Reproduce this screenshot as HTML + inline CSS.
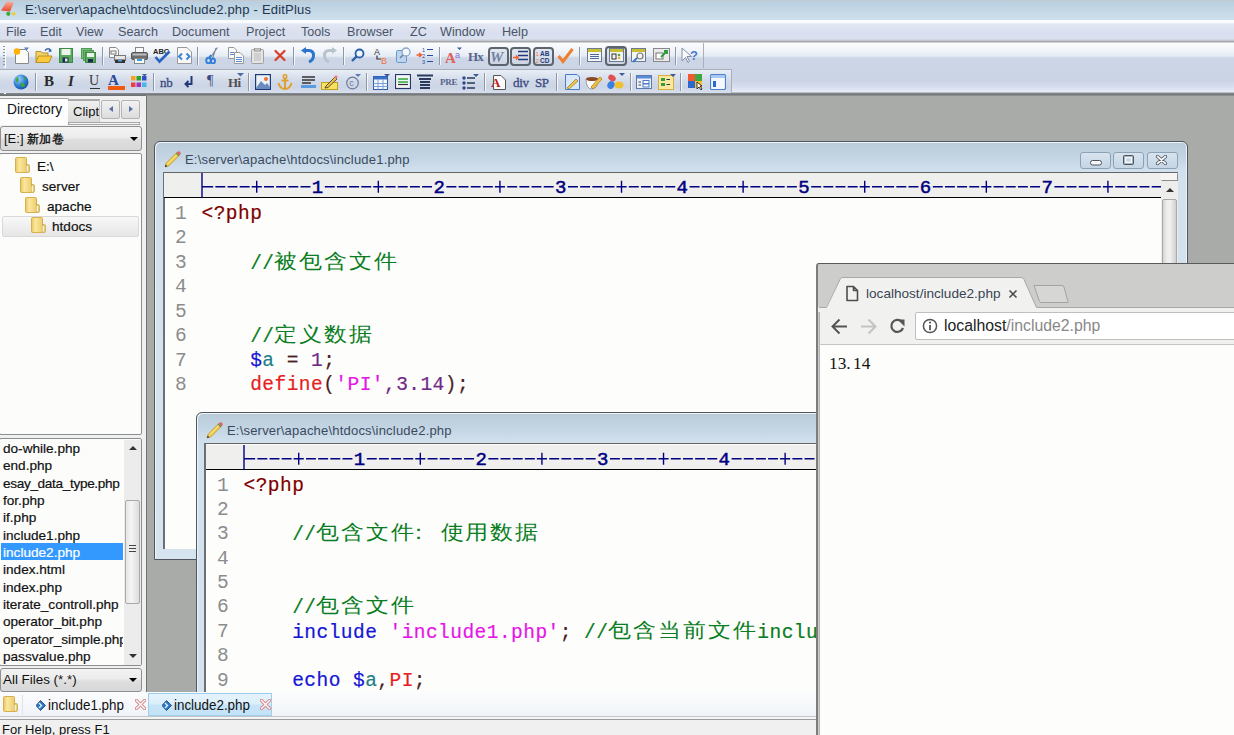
<!DOCTYPE html>
<html><head><meta charset="utf-8">
<style>
*{box-sizing:border-box}
html,body{margin:0;padding:0}
body{width:1234px;height:735px;overflow:hidden;position:relative;background:#a8aba7;font-family:"Liberation Sans",sans-serif;font-size:12px;color:#000}
.a{position:absolute}
.t{position:absolute;white-space:nowrap;line-height:1}
.fold{width:14px;height:14px;background:linear-gradient(90deg,#f0d070,#fbe9a0 50%,#e6c260);border-radius:1px;border:1px solid #d9b24a}
.frame{border:1px solid #50565c;border-radius:6px 6px 0 0;background:linear-gradient(#b9cad9,#c3d4e3 15px,#d2e1ee 30px,#d6e4f0);box-shadow:inset 1px 1px 0 #eef4fa,inset -1px 0 0 #eef4fa}
.pencil{width:17px;height:17px}
.wtitle{font-size:13px;color:#3a4a5e;letter-spacing:0.2px}
.wbtn{width:31px;height:17px;border:1px solid #8ea2b6;border-radius:3px;background:linear-gradient(#d8e4ef,#c5d5e4)}
.code{position:absolute;white-space:pre;font-family:"Liberation Mono",monospace;font-size:19.5px;letter-spacing:0.46px;line-height:24.3px;height:24.3px;-webkit-text-stroke:0.2px}
.code .cj{font-size:22.5px;letter-spacing:1.82px;display:inline-block;transform:scale(1,0.87);transform-origin:0 55%;-webkit-text-stroke:0}
.ln{color:#8c8c8c;-webkit-text-stroke:0}
.dia{width:8px;height:8px;transform:rotate(45deg);background:linear-gradient(135deg,#8fd0f5,#1a6fb8);border:1px solid #1a4f8a}
.xcl{font-size:11px;color:#d06060;line-height:1}
.mono{font-family:"Liberation Mono",monospace}
</style></head><body>

<!-- TITLE BAR -->
<div class="a" style="left:0;top:0;width:1234px;height:21px;background:linear-gradient(#c2cad0 0,#c2cad0 1px,#b9cfdf 1px,#c6d9e7 12px,#cee0ec 20px)"></div>
<svg class="a" style="left:0;top:0" width="18" height="18" viewBox="0 0 18 18"><defs><linearGradient id="tg" x1="0" y1="0" x2="0" y2="1"><stop offset="0" stop-color="#f8b0a0"/><stop offset="1" stop-color="#e8482a"/></linearGradient></defs><path d="M1 10.5L6.5 1.5L14 2.5L10 11.5Z" fill="url(#tg)"/><circle cx="8.3" cy="13.8" r="2.1" fill="#3aaa3a"/><path d="M13.8 11.3L14.6 13L16.3 13.8L14.6 14.6L13.8 16.3L13 14.6L11.3 13.8L13 13Z" fill="#e8c818"/><circle cx="13.8" cy="13.8" r="1.4" fill="#f0d020"/></svg>
<div class="t" id="ttl" style="left:25px;top:3px;font-size:13px;letter-spacing:0.2px;color:#22364f">E:\server\apache\htdocs\include2.php - EditPlus</div>

<!-- MENU BAR -->
<div class="a" style="left:0;top:20px;width:1234px;height:21px;background:linear-gradient(#f6f9fd 0,#fdfeff 2px,#e2e7f3 4px,#dae0ef 12px,#d8dfef 18px,#dfe4f1 19px,#c4c8ce 20px)"></div>
<div id="menu" style="color:#4a5466;font-size:12.6px">
<div class="t" style="left:6px;top:26px">File</div>
<div class="t" style="left:40px;top:26px">Edit</div>
<div class="t" style="left:76px;top:26px">View</div>
<div class="t" style="left:118px;top:26px">Search</div>
<div class="t" style="left:172px;top:26px">Document</div>
<div class="t" style="left:246px;top:26px">Project</div>
<div class="t" style="left:301px;top:26px">Tools</div>
<div class="t" style="left:347px;top:26px">Browser</div>
<div class="t" style="left:410px;top:26px">ZC</div>
<div class="t" style="left:440px;top:26px">Window</div>
<div class="t" style="left:502px;top:26px">Help</div>
</div>

<!-- REBAR -->
<div class="a" style="left:0;top:41px;width:1234px;height:55px;background:linear-gradient(#a4a8ac 0,#a4a8ac 1px,#fbfcfd 2px,#f3f6fa 8px,#e6ecf5 15px,#cdd6e6 17px,#cbd4e5 40px,#d7deee 46px,#e8eefa 51px,#8a8e90 52px,#6f7274 54px,#a9aaa9 55px)"></div>


<!-- TOOLBAR -->
<div class="a" style="left:3px;top:46px;width:2px;height:21px;background:repeating-linear-gradient(#8c95a3 0,#8c95a3 1px,transparent 1px,transparent 3px);box-shadow:1px 1px 0 #fff"></div>
<div class="a" style="left:3px;top:72px;width:2px;height:21px;background:repeating-linear-gradient(#8c95a3 0,#8c95a3 1px,transparent 1px,transparent 3px);box-shadow:1px 1px 0 #fff"></div>
<svg class="a" style="left:13px;top:47px" width="17" height="17" viewBox="0 0 17 17"><path d="M2.5 2.5H12.5L15.5 5.5V16.5H2.5Z" fill="#fbfbfa" stroke="#8a8a8a"/><circle cx="4" cy="4.5" r="3.2" fill="#ffb000"/><path d="M11 0.5H16L13.5 3.5Z" fill="#4f7fbf"/></svg>
<svg class="a" style="left:35px;top:47px" width="18" height="17" viewBox="0 0 18 17"><path d="M1 4.5H6L7.5 6H13V15.5H1Z" fill="#f1d36a" stroke="#b0902a"/><path d="M3.5 9H17L14 15.5H1Z" fill="#f9c93e" stroke="#c09020"/><path d="M10 3.5Q13 0 16 3.5" fill="none" stroke="#3a68a8" stroke-width="1.6"/><path d="M14.5 1.5L17 4.5L13.5 5Z" fill="#3a68a8"/></svg>
<svg class="a" style="left:59px;top:48px" width="14" height="15" viewBox="0 0 14 15"><rect x="0.5" y="0.5" width="13" height="14" fill="#5aa860" stroke="#3f8a45"/><rect x="2.5" y="1" width="9" height="6" fill="#eaf4ea"/><rect x="3.5" y="9.5" width="6" height="5" fill="#1c2e50"/><rect x="6" y="10.5" width="2.5" height="3" fill="#e8e8e8"/></svg>
<svg class="a" style="left:81px;top:48px" width="15" height="15" viewBox="0 0 15 15"><rect x="0.5" y="0.5" width="10" height="10" fill="#7cc080" stroke="#4f9a55"/><rect x="2.5" y="2.5" width="10" height="10" fill="#6ab470" stroke="#4f9a55"/><rect x="4.5" y="4.5" width="10" height="10" fill="#5aa860" stroke="#3f8a45"/><rect x="6" y="5" width="7" height="4" fill="#e8f2e8"/><rect x="7" y="11" width="5" height="3.5" fill="#1c2e50"/></svg>
<div class="a" style="left:102px;top:47px;width:1px;height:18px;background:#8e97a6;box-shadow:1px 0 0 #f4f7fb"></div>
<svg class="a" style="left:109px;top:47px" width="17" height="17" viewBox="0 0 17 17"><path d="M0.5 0.5H7L9.5 3V10.5H0.5Z" fill="#fafafa" stroke="#8a8a8a"/><rect x="2" y="4" width="5" height="3" fill="none" stroke="#777"/><rect x="5.5" y="8.5" width="11" height="5" fill="#e6e6e6" stroke="#777"/><rect x="6" y="12.5" width="10" height="3.5" fill="#333"/><rect x="9" y="13" width="4" height="1.5" fill="#4aa0e0"/></svg>
<svg class="a" style="left:131px;top:47px" width="17" height="17" viewBox="0 0 17 17"><rect x="4.5" y="0.5" width="8" height="5" fill="#fafafa" stroke="#888"/><rect x="0.5" y="5.5" width="16" height="7" rx="1.5" fill="#6e6e6e" stroke="#555"/><rect x="1.5" y="6.5" width="14" height="2" fill="#bdbdbd"/><rect x="3.5" y="11.5" width="10" height="5" fill="#fafafa" stroke="#888"/><rect x="6" y="12" width="5" height="2" fill="#3b9ad8"/></svg>
<svg class="a" style="left:153px;top:47px" width="18" height="17" viewBox="0 0 18 17"><text x="0" y="7" font-family="Liberation Sans" font-weight="bold" font-size="7.5" fill="#222">ABC</text><path d="M2.5 10L6.5 14.5L16.5 4.5" fill="none" stroke="#2a62c0" stroke-width="2.6"/></svg>
<svg class="a" style="left:177px;top:47px" width="15" height="17" viewBox="0 0 15 17"><path d="M0.5 0.5H10L14.5 5V16.5H0.5Z" fill="#f8f8f8" stroke="#999"/><path d="M5 6.5L2 9.5L5 12.5M9.5 6.5L12.5 9.5L9.5 12.5" fill="none" stroke="#3a86d8" stroke-width="2"/></svg>
<div class="a" style="left:197px;top:47px;width:1px;height:18px;background:#8e97a6;box-shadow:1px 0 0 #f4f7fb"></div>
<svg class="a" style="left:205px;top:47px" width="14" height="17" viewBox="0 0 14 17"><path d="M5 11L12.5 0.5M7.5 11.5L11 1" fill="none" stroke="#7a8aa0" stroke-width="1.2"/><ellipse cx="3.5" cy="13.5" rx="2.3" ry="2.8" fill="none" stroke="#2f7fd8" stroke-width="1.9"/><ellipse cx="8" cy="14" rx="2" ry="2.5" fill="none" stroke="#2f7fd8" stroke-width="1.9"/><path d="M4.5 10.5L6 8" stroke="#2f7fd8" stroke-width="2"/></svg>
<svg class="a" style="left:228px;top:47px" width="16" height="17" viewBox="0 0 16 17"><path d="M0.5 0.5H6L8.5 3V11.5H0.5Z" fill="#f9f9f9" stroke="#9a9a9a"/><path d="M6.5 5.5H12L15.5 9V16.5H6.5Z" fill="#f9f9f9" stroke="#9a9a9a"/><path d="M8 10.5H14M8 12.5H14M8 14.5H14M2 5.5H6M2 7.5H6" stroke="#5a8ad0" stroke-width="1"/></svg>
<svg class="a" style="left:251px;top:48px" width="13" height="16" viewBox="0 0 13 16"><rect x="0.5" y="1.5" width="12" height="14" rx="1" fill="#e4e4e4" stroke="#a0a0a0"/><rect x="3.5" y="0" width="6" height="3" fill="#c8c8c8" stroke="#999"/><path d="M3 6H10M3 8H10M3 10H10M3 12H10" stroke="#bbb"/></svg>
<svg class="a" style="left:273px;top:49px" width="14" height="13" viewBox="0 0 14 13"><path d="M2.5 2L11.5 11M11.5 2L2.5 11" stroke="#d8402a" stroke-width="2.3" stroke-linecap="round"/></svg>
<div class="a" style="left:293px;top:47px;width:1px;height:18px;background:#8e97a6;box-shadow:1px 0 0 #f4f7fb"></div>
<svg class="a" style="left:301px;top:47px" width="14" height="17" viewBox="0 0 14 17"><path d="M3 3.5H8Q12.5 3.5 12.5 8.5Q12.5 13 8 15" fill="none" stroke="#2a74d0" stroke-width="3"/><path d="M0 3.5L5 0V7Z" fill="#2a74d0"/></svg>
<svg class="a" style="left:323px;top:47px" width="14" height="17" viewBox="0 0 14 17"><path d="M11 3.5H6Q1.5 3.5 1.5 8.5Q1.5 13 6 15" fill="none" stroke="#b8c4cc" stroke-width="3"/><path d="M14 3.5L9 0V7Z" fill="#b8c4cc"/></svg>
<div class="a" style="left:343px;top:47px;width:1px;height:18px;background:#8e97a6;box-shadow:1px 0 0 #f4f7fb"></div>
<svg class="a" style="left:351px;top:48px" width="14" height="15" viewBox="0 0 14 15"><circle cx="8.5" cy="5.5" r="4" fill="#eef5fc" stroke="#2a5fa8" stroke-width="1.8"/><path d="M5.5 8.5L1 13" stroke="#2a5fa8" stroke-width="2.4"/></svg>
<svg class="a" style="left:373px;top:47px" width="17" height="17" viewBox="0 0 17 17"><text x="1" y="8" font-family="Liberation Sans" font-size="9" fill="#333">A</text><path d="M4 8.5V12H8" fill="none" stroke="#333" stroke-width="1.2"/><text x="8" y="16.5" font-family="Liberation Sans" font-size="9" fill="#f0703a">B</text></svg>
<svg class="a" style="left:396px;top:47px" width="15" height="17" viewBox="0 0 15 17"><rect x="0.5" y="3.5" width="10" height="12" rx="1" fill="#bcd4ee" stroke="#6a98cc"/><circle cx="10" cy="5" r="4" fill="#f4f8fc" stroke="#8aa8c8" stroke-width="1.3"/><path d="M7 8L4 11" stroke="#6a80a0" stroke-width="1.6"/></svg>
<svg class="a" style="left:416px;top:47px" width="18" height="17" viewBox="0 0 18 17"><path d="M0.5 8H5M3 6L5.5 8L3 10" fill="none" stroke="#f06030" stroke-width="1.6"/><text x="6" y="5" font-family="Liberation Sans" font-size="5.5" fill="#2a4a9a">1</text><text x="6" y="11" font-family="Liberation Sans" font-size="5.5" fill="#2a4a9a">2</text><text x="6" y="17" font-family="Liberation Sans" font-size="5.5" fill="#2a4a9a">3</text><path d="M11 2.5H17M11 8.5H17M11 14.5H17" stroke="#2a4a9a" stroke-width="1.2"/></svg>
<div class="a" style="left:439px;top:47px;width:1px;height:18px;background:#8e97a6;box-shadow:1px 0 0 #f4f7fb"></div>
<svg class="a" style="left:445px;top:47px" width="18" height="17" viewBox="0 0 18 17"><text x="0" y="16" font-family="Liberation Serif" font-size="15" font-weight="bold" fill="#e0605a">A</text><text x="10" y="11" font-family="Liberation Sans" font-size="9" fill="#8870c8">a</text><path d="M12 0.5H17L14.5 3Z" fill="#3a5a9a"/></svg>
<div class="t" style="left:468px;top:50px;font-family:'Liberation Serif',serif;font-size:13px;font-weight:bold;font-style:normal;color:#56648a;letter-spacing:-0.8px">Hx</div>
<div class="a" style="left:488px;top:47px;width:21px;height:19px;border:2px solid #5c646e;border-radius:4px;background:linear-gradient(#e2e7ef,#cdd5e2)"></div>
<div class="t" style="left:490px;top:50px;font-family:'Liberation Serif',serif;font-size:15px;font-weight:bold;font-style:italic;color:#7282a8;letter-spacing:0px">W</div>
<div class="a" style="left:510px;top:47px;width:21px;height:19px;border:2px solid #5c646e;border-radius:4px;background:linear-gradient(#e2e7ef,#cdd5e2)"></div>
<svg class="a" style="left:513px;top:50px" width="16" height="12" viewBox="0 0 16 12"><path d="M5 1.5H15M5 5.5H15M5 9.5H15" stroke="#223a7a" stroke-width="1.6"/><path d="M0 7.5H5M3 5.5L5 7.5L3 9.5" fill="none" stroke="#f06030" stroke-width="1.4"/></svg>
<div class="a" style="left:533px;top:47px;width:21px;height:19px;border:2px solid #5c646e;border-radius:4px;background:linear-gradient(#e2e7ef,#cdd5e2)"></div>
<svg class="a" style="left:535px;top:50px" width="17" height="13" viewBox="0 0 17 13"><text x="0.5" y="5.5" font-family="Liberation Sans" font-size="6" fill="#f07a40">1</text><text x="0.5" y="12.5" font-family="Liberation Sans" font-size="6" fill="#f07a40">2</text><text x="5" y="6" font-family="Liberation Sans" font-weight="bold" font-size="6.5" fill="#223a7a">AB</text><text x="5" y="13" font-family="Liberation Sans" font-weight="bold" font-size="6.5" fill="#223a7a">CD</text></svg>
<svg class="a" style="left:557px;top:47px" width="17" height="17" viewBox="0 0 17 17"><path d="M1.5 9L6 14.5L15.5 2" fill="none" stroke="#f08030" stroke-width="3"/></svg>
<div class="a" style="left:579px;top:47px;width:1px;height:18px;background:#8e97a6;box-shadow:1px 0 0 #f4f7fb"></div>
<svg class="a" style="left:587px;top:48px" width="15" height="14" viewBox="0 0 15 14"><rect x="0.5" y="0.5" width="14" height="13" fill="#f4f4f4" stroke="#6a7a90"/><rect x="1" y="1" width="13" height="3" fill="#c8c030"/><path d="M3 6.5H12M3 8.5H12M3 10.5H12" stroke="#4a6aa0"/></svg>
<div class="a" style="left:605px;top:46px;width:22px;height:20px;border:2px solid #5c646e;border-radius:4px;background:linear-gradient(#e2e7ef,#cdd5e2)"></div>
<svg class="a" style="left:609px;top:48px" width="15" height="14" viewBox="0 0 15 14"><rect x="0.5" y="0.5" width="14" height="13" fill="#f4f4f4" stroke="#6a7a90"/><rect x="1" y="1" width="13" height="3" fill="#c8c030"/><rect x="3" y="6" width="4" height="5" fill="none" stroke="#333"/><circle cx="10" cy="7" r="1.3" fill="#50a050"/><circle cx="10" cy="10" r="1.3" fill="#f0b030"/></svg>
<svg class="a" style="left:631px;top:48px" width="15" height="15" viewBox="0 0 15 15"><rect x="0.5" y="0.5" width="14" height="13" fill="#f4f4f4" stroke="#6a7a90"/><rect x="1" y="1" width="13" height="3" fill="#c8c030"/><circle cx="9" cy="8" r="3" fill="none" stroke="#777" stroke-width="1.2"/><path d="M6 10L2 14" stroke="#3a7ad8" stroke-width="2.2"/></svg>
<svg class="a" style="left:653px;top:48px" width="17" height="14" viewBox="0 0 17 14"><rect x="0.5" y="0.5" width="16" height="13" fill="#eaeaea" stroke="#888"/><rect x="3" y="5" width="7" height="6" fill="#fff" stroke="#777"/><path d="M8 9L14 3M11 3H14V6" fill="none" stroke="#2a9a3a" stroke-width="1.8"/></svg>
<div class="a" style="left:675px;top:47px;width:1px;height:18px;background:#8e97a6;box-shadow:1px 0 0 #f4f7fb"></div>
<svg class="a" style="left:681px;top:47px" width="17" height="17" viewBox="0 0 17 17"><path d="M1 1V14L4.5 10.5L7 15.5L8.5 14.5L6 9.5H10.5Z" fill="#fafafa" stroke="#8090a8"/><text x="9" y="13" font-family="Liberation Sans" font-weight="bold" font-size="13" fill="#4a7ad0">?</text></svg>
<div class="a" style="left:703px;top:43px;width:1px;height:25px;background:#a9b0b9"></div>
<div class="a" style="left:0;top:69px;width:732px;height:1px;background:#a9b0b9"></div>
<div class="a" style="left:731px;top:69px;width:1px;height:24px;background:#a9b0b9"></div>
<div class="a" style="left:0;top:70px;width:731px;height:23px;background:linear-gradient(#e9eef6,#dfe6f1 20%,#d1d9e8 50%,#ccd5e6 75%,#d8dfee 100%)"></div>
<svg class="a" style="left:13px;top:74px" width="16" height="16" viewBox="0 0 16 16"><defs><radialGradient id="gl" cx="0.35" cy="0.3" r="0.8"><stop offset="0" stop-color="#9ad0f8"/><stop offset="0.6" stop-color="#2a78d0"/><stop offset="1" stop-color="#1a4a9a"/></radialGradient></defs><circle cx="8" cy="8" r="7.5" fill="url(#gl)"/><path d="M4 3Q7 5 5 8Q3 9 3 6Z M8 9Q11 8 12 12Q10 14 8 12Z M10 2Q13 3 13 6Q11 5 10 2Z" fill="#3aa83a"/></svg>
<div class="a" style="left:35px;top:73px;width:1px;height:18px;background:#8e97a6;box-shadow:1px 0 0 #f4f7fb"></div>
<div class="t" style="left:44px;top:74px;font-family:'Liberation Serif',serif;font-size:15px;font-weight:bold;font-style:normal;color:#2a2a2a;letter-spacing:0px">B</div>
<div class="t" style="left:68px;top:74px;font-family:'Liberation Serif',serif;font-size:15px;font-weight:bold;font-style:italic;color:#2a2a2a;letter-spacing:0px">I</div>
<div class="t" style="left:89px;top:74px;font-family:'Liberation Serif',serif;font-size:14px;font-weight:normal;font-style:normal;color:#3a3a3a;letter-spacing:0px">U</div>
<div class="a" style="left:90px;top:88px;width:10px;height:1px;background:#333"></div>
<div class="t" style="left:108px;top:73px;font-family:'Liberation Serif',serif;font-size:15px;font-weight:bold;font-style:normal;color:#2a4a9a;letter-spacing:0px">A</div>
<div class="a" style="left:108px;top:86px;width:17px;height:4px;background:#f05a10"></div>
<svg class="a" style="left:131px;top:74px" width="16" height="16" viewBox="0 0 16 16"><rect x="0" y="2" width="4.5" height="4.5" fill="#f8a020"/><rect x="5.5" y="2" width="4.5" height="4.5" fill="#30a030"/><rect x="11" y="2" width="4.5" height="4.5" fill="#3050c0"/><rect x="0" y="8.5" width="4.5" height="4.5" fill="#e84040"/><rect x="5.5" y="8.5" width="4.5" height="4.5" fill="#a030c0"/><rect x="11" y="8.5" width="4.5" height="4.5" fill="#40b8e8"/><path d="M11 0H16L13.5 2.5Z" fill="#3a5a9a"/></svg>
<div class="a" style="left:153px;top:73px;width:1px;height:18px;background:#8e97a6;box-shadow:1px 0 0 #f4f7fb"></div>
<div class="t" style="left:160px;top:76px;font-family:'Liberation Serif',serif;font-size:13px;font-weight:normal;font-style:normal;color:#3a4a80;letter-spacing:-0.3px;-webkit-text-stroke:0.3px">nb</div>
<svg class="a" style="left:184px;top:76px" width="9" height="12" viewBox="0 0 9 12"><path d="M7.5 0V8H2M4.5 5L1.5 8L4.5 11" fill="none" stroke="#223a7a" stroke-width="2"/></svg>
<div class="t" style="left:207px;top:74px;font-family:'Liberation Serif',serif;font-size:14px;font-weight:normal;font-style:normal;color:#3a4a80;letter-spacing:0px">¶</div>
<div class="t" style="left:228px;top:76px;font-family:'Liberation Serif',serif;font-size:13px;font-weight:bold;font-style:normal;color:#505050;letter-spacing:-0.5px">Hi</div>
<svg class="a" style="left:237px;top:73px" width="7" height="4" viewBox="0 0 7 4"><path d="M0 0H7L3.5 3.5Z" fill="#4a6aa8"/></svg>
<div class="a" style="left:248px;top:73px;width:1px;height:18px;background:#8e97a6;box-shadow:1px 0 0 #f4f7fb"></div>
<svg class="a" style="left:255px;top:74px" width="16" height="16" viewBox="0 0 16 16"><rect x="0.5" y="0.5" width="15" height="15" fill="#eaf2fa" stroke="#1a3a7a" stroke-width="1.4"/><path d="M1 14L6 7L10 11L12 9L15 13V15H1Z" fill="#6a8ac0"/><circle cx="11" cy="5" r="2" fill="#f07030"/></svg>
<svg class="a" style="left:277px;top:74px" width="16" height="16" viewBox="0 0 16 16"><circle cx="8" cy="2.5" r="1.8" fill="none" stroke="#e0a030" stroke-width="1.5"/><path d="M8 4V15M4.5 6.5H11.5M1.5 9Q3 15 8 15Q13 15 14.5 9" fill="none" stroke="#e0a030" stroke-width="2"/></svg>
<svg class="a" style="left:301px;top:75px" width="15" height="13" viewBox="0 0 15 13"><path d="M1 2H14M1 5H14M1 8H10" stroke="#333" stroke-width="1.4"/><rect x="0" y="10" width="15" height="3" fill="#5a9ae0"/></svg>
<svg class="a" style="left:321px;top:74px" width="17" height="16" viewBox="0 0 17 16"><rect x="0.5" y="8.5" width="16" height="7" fill="#f8e060" stroke="#c0a020"/><path d="M5 12L14 3L16 5L7 13.5L4 14Z" fill="#f0c040" stroke="#333" stroke-width="0.8"/><path d="M13 3L15 1L17 3L15 5Z" fill="#f08080"/></svg>
<svg class="a" style="left:346px;top:73px" width="15" height="17" viewBox="0 0 15 17"><circle cx="6.5" cy="10" r="5.8" fill="none" stroke="#6a7a98" stroke-width="1.2"/><text x="3.2" y="13.3" font-family="Liberation Sans" font-size="9" fill="#6a7a98">c</text><path d="M9 1H15L12 4Z" fill="#5a7ab0"/></svg>
<div class="a" style="left:366px;top:73px;width:1px;height:18px;background:#8e97a6;box-shadow:1px 0 0 #f4f7fb"></div>
<svg class="a" style="left:373px;top:74px" width="17" height="16" viewBox="0 0 17 16"><rect x="0.5" y="2.5" width="14" height="13" fill="#f4f8fc" stroke="#2a5aa8"/><rect x="0.5" y="2.5" width="14" height="3" fill="#3a70c8"/><path d="M0.5 9.5H14.5M0.5 12.5H14.5M5 5V15.5M10 5V15.5" stroke="#7aa0d8"/><path d="M11 0H17L14 3Z" fill="#3a5a9a"/></svg>
<svg class="a" style="left:395px;top:74px" width="16" height="16" viewBox="0 0 16 16"><rect x="0.5" y="0.5" width="15" height="14" fill="#f6f6f6" stroke="#223a6a" stroke-width="1.2"/><path d="M3 5H13M3 8H13" stroke="#2aa83a" stroke-width="1.5"/><path d="M3 10.5H13" stroke="#333" stroke-width="1.2"/></svg>
<svg class="a" style="left:417px;top:74px" width="16" height="16" viewBox="0 0 16 16"><path d="M0 1.5H16M2 5H14M3 8H13M3 11H13M3 14H13" stroke="#2a3a5a" stroke-width="2"/></svg>
<div class="t" style="left:440px;top:78px;font-family:'Liberation Serif',serif;font-size:9px;font-weight:bold;font-style:normal;color:#56648a;letter-spacing:-0.2px">PRE</div>
<svg class="a" style="left:462px;top:74px" width="17" height="16" viewBox="0 0 17 16"><circle cx="2" cy="4" r="1.7" fill="#2a4a8a"/><circle cx="2" cy="9" r="1.7" fill="#2a4a8a"/><circle cx="2" cy="14" r="1.7" fill="#2a4a8a"/><path d="M5 4H13M5 9H13M5 14H13" stroke="#2a3a5a" stroke-width="1.6"/><path d="M11 0H17L14 3Z" fill="#3a5a9a"/></svg>
<div class="a" style="left:484px;top:73px;width:1px;height:18px;background:#8e97a6;box-shadow:1px 0 0 #f4f7fb"></div>
<svg class="a" style="left:491px;top:74px" width="15" height="16" viewBox="0 0 15 16"><path d="M2.5 1.5H10L14.5 6V15.5H2.5Z" fill="#fafafa" stroke="#555"/><text x="0" y="13" font-family="Liberation Serif" font-weight="bold" font-size="13" fill="#c01818">A</text></svg>
<div class="t" style="left:513px;top:76px;font-family:'Liberation Serif',serif;font-size:13px;font-weight:normal;font-style:normal;color:#3a4a80;letter-spacing:-0.3px;-webkit-text-stroke:0.3px">div</div>
<div class="t" style="left:535px;top:76px;font-family:'Liberation Serif',serif;font-size:13px;font-weight:normal;font-style:normal;color:#3a4a80;letter-spacing:-0.4px;-webkit-text-stroke:0.3px">SP</div>
<div class="a" style="left:556px;top:73px;width:1px;height:18px;background:#8e97a6;box-shadow:1px 0 0 #f4f7fb"></div>
<svg class="a" style="left:564px;top:74px" width="16" height="16" viewBox="0 0 16 16"><path d="M1.5 0.5H13L15.5 3V15.5H1.5Z" fill="#d8e8f8" stroke="#4a7ac8"/><path d="M3 14L12 5L14 7L5 15Z" fill="#f0c850" stroke="#a08020" stroke-width="0.8"/></svg>
<svg class="a" style="left:585px;top:74px" width="17" height="16" viewBox="0 0 17 16"><path d="M1 5Q1 15 7 15Q13 15 13 5Z" fill="#fafafa" stroke="#999"/><ellipse cx="7" cy="5" rx="6" ry="2" fill="#8a4a2a"/><path d="M6 13L15 3L17 5L8 15Z" fill="#f0c040" stroke="#b08020" stroke-width="0.8"/></svg>
<svg class="a" style="left:607px;top:73px" width="18" height="17" viewBox="0 0 18 17"><ellipse cx="5" cy="5" rx="4" ry="3" transform="rotate(35 5 5)" fill="#e05050"/><ellipse cx="4" cy="12" rx="3.5" ry="4" transform="rotate(30 4 12)" fill="#3a80e0"/><ellipse cx="12" cy="12" rx="4.5" ry="3.5" fill="#f0c030"/><path d="M12 0H18L15 3Z" fill="#3a5a9a"/></svg>
<div class="a" style="left:630px;top:73px;width:1px;height:18px;background:#8e97a6;box-shadow:1px 0 0 #f4f7fb"></div>
<svg class="a" style="left:636px;top:75px" width="16" height="14" viewBox="0 0 16 14"><rect x="0.5" y="0.5" width="15" height="13" fill="#eef2f8" stroke="#5a7aa8"/><rect x="1" y="1" width="14" height="2.5" fill="#5a8ad8"/><path d="M2.5 7H5M2.5 10H5" stroke="#444"/><rect x="7" y="5.5" width="6" height="3" fill="#fff" stroke="#4a7ac8"/><rect x="7" y="9" width="6" height="3" fill="#fff" stroke="#4a7ac8"/></svg>
<svg class="a" style="left:658px;top:74px" width="18" height="16" viewBox="0 0 18 16"><rect x="0.5" y="1.5" width="15" height="14" fill="#f8e8a0" stroke="#d8b040"/><rect x="3" y="4" width="4" height="3" fill="#3a9a40"/><rect x="3" y="9" width="4" height="3" fill="#3a9a40"/><path d="M8.5 5.5H12M8.5 10.5H12" stroke="#333"/><path d="M12 0H18L15 3Z" fill="#3a5a9a"/></svg>
<div class="a" style="left:680px;top:73px;width:1px;height:18px;background:#8e97a6;box-shadow:1px 0 0 #f4f7fb"></div>
<svg class="a" style="left:688px;top:74px" width="15" height="16" viewBox="0 0 15 16"><rect x="0" y="0" width="7" height="7" fill="#f05a30"/><rect x="7" y="0" width="7" height="7" fill="#40a840"/><rect x="0" y="7" width="7" height="7" fill="#2a6ad0"/><rect x="7" y="7" width="7" height="7" fill="#f8c030"/><path d="M9 8V15L11 13L13 16L14 15L12 12H14Z" fill="#fff" stroke="#111" stroke-width="0.8"/></svg>
<svg class="a" style="left:710px;top:74px" width="16" height="16" viewBox="0 0 16 16"><rect x="0.5" y="0.5" width="15" height="15" rx="1.5" fill="#f4f8fc" stroke="#4a80d0" stroke-width="1.2"/><rect x="1" y="1" width="14" height="3" fill="#a8c8f0"/><rect x="3" y="7" width="3" height="6" fill="#2a6ad0"/></svg>
<!-- /TOOLBAR -->
<!-- INCLUDE1 -->
<div class="a frame" style="left:154px;top:141px;width:1034px;height:419px"></div>
<div class="pencil a" style="left:164px;top:151px"><svg width="17" height="17" viewBox="0 0 17 17"><path d="M1 16L2.2 12.2L12.8 1.6L15.4 4.2L4.8 14.8Z" fill="#f2cf4a" stroke="#b8902a" stroke-width="0.8"/><path d="M3.2 13.2L13.8 2.6" stroke="#fbe89a" stroke-width="1"/><path d="M1 16L1.7 13.6L3.4 15.3Z" fill="#333"/><path d="M12.8 1.6L14 0.4Q14.8 -0.2 15.6 0.6L16.4 1.4Q17.2 2.2 16.6 3L15.4 4.2Z" fill="#e06060"/><path d="M12.2 2.2L14.8 4.8" stroke="#4a8a5a" stroke-width="1.2"/></svg></div>
<div class="t wtitle" style="left:185px;top:153px">E:\server\apache\htdocs\include1.php</div>
<div class="a wbtn" style="left:1080px;top:152px"></div>
<div class="a wbtn" style="left:1113px;top:152px"></div>
<div class="a wbtn" style="left:1147px;top:152px"></div>
<svg class="a" style="left:1080px;top:152px" width="98" height="17" viewBox="0 0 98 17">
<rect x="10.5" y="8.5" width="11" height="4.5" rx="2" fill="#f4f6f8" stroke="#4a5560" stroke-width="1"/>
<rect x="43.5" y="3.5" width="10" height="9" rx="1" fill="#8a9cb0" stroke="#4a5560" stroke-width="1"/>
<rect x="45.5" y="5.5" width="6" height="5" fill="#c8d6e4" stroke="#f4f6f8" stroke-width="1.6"/>
<path d="M77.5 4.5L85.5 11.5M85.5 4.5L77.5 11.5" stroke="#4a5560" stroke-width="3.4" stroke-linecap="round"/>
<path d="M77.5 4.5L85.5 11.5M85.5 4.5L77.5 11.5" stroke="#f4f6f8" stroke-width="1.7" stroke-linecap="round"/>
</svg>
<div class="a" style="left:163px;top:172px;width:1015px;height:377px;background:#fdfefc;border-top:1px solid #646464;border-left:2px solid #6c7070"></div>
<div class="a" style="left:164px;top:173px;width:997px;height:25px;background:#efefee;border-bottom:1px solid #000"></div>
<svg class="a" style="left:201.5px;top:173px;overflow:visible" width="960" height="25" viewBox="0 0 960 25"><g stroke="#000080" stroke-width="1.4" fill="none"><line x1="0" y1="0" x2="0" y2="25"/><path d="M0.00 13.8H11.16M13.36 13.8H23.32M25.52 13.8H35.48M37.68 13.8H47.64M49.64 13.8H59.80M54.72 7.800000000000001V19.8M62.00 13.8H71.96M74.16 13.8H84.12M86.32 13.8H96.28M98.48 13.8H108.44M122.80 13.8H132.76M134.96 13.8H144.92M147.12 13.8H157.08M159.28 13.8H169.24M171.24 13.8H181.40M176.32 7.800000000000001V19.8M183.60 13.8H193.56M195.76 13.8H205.72M207.92 13.8H217.88M220.08 13.8H230.04M244.40 13.8H254.36M256.56 13.8H266.52M268.72 13.8H278.68M280.88 13.8H290.84M292.84 13.8H303.00M297.92 7.800000000000001V19.8M305.20 13.8H315.16M317.36 13.8H327.32M329.52 13.8H339.48M341.68 13.8H351.64M366.00 13.8H375.96M378.16 13.8H388.12M390.32 13.8H400.28M402.48 13.8H412.44M414.44 13.8H424.60M419.52 7.800000000000001V19.8M426.80 13.8H436.76M438.96 13.8H448.92M451.12 13.8H461.08M463.28 13.8H473.24M487.60 13.8H497.56M499.76 13.8H509.72M511.92 13.8H521.88M524.08 13.8H534.04M536.04 13.8H546.20M541.12 7.800000000000001V19.8M548.40 13.8H558.36M560.56 13.8H570.52M572.72 13.8H582.68M584.88 13.8H594.84M609.20 13.8H619.16M621.36 13.8H631.32M633.52 13.8H643.48M645.68 13.8H655.64M657.64 13.8H667.80M662.72 7.800000000000001V19.8M670.00 13.8H679.96M682.16 13.8H692.12M694.32 13.8H704.28M706.48 13.8H716.44M730.80 13.8H740.76M742.96 13.8H752.92M755.12 13.8H765.08M767.28 13.8H777.24M779.24 13.8H789.40M784.32 7.800000000000001V19.8M791.60 13.8H801.56M803.76 13.8H813.72M815.92 13.8H825.88M828.08 13.8H838.04M852.40 13.8H862.36M864.56 13.8H874.52M876.72 13.8H886.68M888.88 13.8H898.84M900.84 13.8H911.00M905.92 7.800000000000001V19.8M913.20 13.8H923.16M925.36 13.8H935.32M937.52 13.8H947.48M949.68 13.8H959.64"/></g><text x="115.52" y="20.1" text-anchor="middle" font-family="Liberation Mono" font-size="19" stroke="#000080" stroke-width="0.5" fill="#000080">1</text><text x="237.12" y="20.1" text-anchor="middle" font-family="Liberation Mono" font-size="19" stroke="#000080" stroke-width="0.5" fill="#000080">2</text><text x="358.72" y="20.1" text-anchor="middle" font-family="Liberation Mono" font-size="19" stroke="#000080" stroke-width="0.5" fill="#000080">3</text><text x="480.32" y="20.1" text-anchor="middle" font-family="Liberation Mono" font-size="19" stroke="#000080" stroke-width="0.5" fill="#000080">4</text><text x="601.92" y="20.1" text-anchor="middle" font-family="Liberation Mono" font-size="19" stroke="#000080" stroke-width="0.5" fill="#000080">5</text><text x="723.52" y="20.1" text-anchor="middle" font-family="Liberation Mono" font-size="19" stroke="#000080" stroke-width="0.5" fill="#000080">6</text><text x="845.12" y="20.1" text-anchor="middle" font-family="Liberation Mono" font-size="19" stroke="#000080" stroke-width="0.5" fill="#000080">7</text></svg>
<div class="code ln" style="left:175px;top:202.00px">1</div>
<div class="code" style="left:201.5px;top:202.00px"><span style="color:#800000">&lt;?php</span></div>
<div class="code ln" style="left:175px;top:226.43px">2</div>
<div class="code ln" style="left:175px;top:250.86px">3</div>
<div class="code" style="left:201.5px;top:250.86px"><span style="color:#4a1f1f">    </span><span style="color:#0a7d23">//</span><span class="cj" style="color:#0a7d23">被包含文件</span></div>
<div class="code ln" style="left:175px;top:275.29px">4</div>
<div class="code ln" style="left:175px;top:299.72px">5</div>
<div class="code ln" style="left:175px;top:324.15px">6</div>
<div class="code" style="left:201.5px;top:324.15px"><span style="color:#4a1f1f">    </span><span style="color:#0a7d23">//</span><span class="cj" style="color:#0a7d23">定义数据</span></div>
<div class="code ln" style="left:175px;top:348.58px">7</div>
<div class="code" style="left:201.5px;top:348.58px"><span style="color:#4a1f1f">    </span><span style="color:#1515d5">$</span><span style="color:#1f7f86">a</span><span style="color:#4a1f1f"> = </span><span style="color:#6f2a86">1</span><span style="color:#4a1f1f">;</span></div>
<div class="code ln" style="left:175px;top:373.01px">8</div>
<div class="code" style="left:201.5px;top:373.01px"><span style="color:#4a1f1f">    </span><span style="color:#e51f1f">define</span><span style="color:#4a1f1f">(</span><span style="color:#e516e5">'PI'</span><span style="color:#6f2a86">,3.14</span><span style="color:#4a1f1f">);</span></div>
<div class="a" style="left:1161px;top:173px;width:17px;height:376px;background:#ededed"></div>
<div class="a" style="left:1161px;top:173px;width:17px;height:8px;background:#f4f4f4;border:1px solid #8c8c8c;border-top-color:#f8f8f8;border-left-color:#f8f8f8"></div>
<div class="a" style="left:1166px;top:188px;width:0;height:0;border-left:4px solid transparent;border-right:4px solid transparent;border-bottom:4px solid #333"></div>
<div class="a" style="left:1162px;top:199px;width:15px;height:340px;background:linear-gradient(90deg,#d4d4d4,#eeeeee 30%,#f0f0f0 55%,#cfcfcf);border:1px solid #a9a9a9;border-radius:2px"></div>
<!-- INCLUDE2 -->
<div class="a frame" style="left:196px;top:412px;width:1100px;height:400px"></div>
<div class="pencil a" style="left:206px;top:422px"><svg width="17" height="17" viewBox="0 0 17 17"><path d="M1 16L2.2 12.2L12.8 1.6L15.4 4.2L4.8 14.8Z" fill="#f2cf4a" stroke="#b8902a" stroke-width="0.8"/><path d="M3.2 13.2L13.8 2.6" stroke="#fbe89a" stroke-width="1"/><path d="M1 16L1.7 13.6L3.4 15.3Z" fill="#333"/><path d="M12.8 1.6L14 0.4Q14.8 -0.2 15.6 0.6L16.4 1.4Q17.2 2.2 16.6 3L15.4 4.2Z" fill="#e06060"/><path d="M12.2 2.2L14.8 4.8" stroke="#4a8a5a" stroke-width="1.2"/></svg></div>
<div class="t wtitle" style="left:227px;top:424px">E:\server\apache\htdocs\include2.php</div>
<div class="a" style="left:204px;top:443px;width:1085px;height:249px;background:#fdfefc;border-top:1px solid #646464;border-left:2px solid #6c7070"></div>
<div class="a" style="left:206px;top:444.5px;width:1084px;height:25px;background:#efefee;border-bottom:1px solid #000"></div>
<svg class="a" style="left:243.5px;top:444.5px;overflow:visible" width="1046" height="25" viewBox="0 0 1046 25"><g stroke="#000080" stroke-width="1.4" fill="none"><line x1="0" y1="0" x2="0" y2="25"/><path d="M0.00 13.8H11.16M13.36 13.8H23.32M25.52 13.8H35.48M37.68 13.8H47.64M49.64 13.8H59.80M54.72 7.800000000000001V19.8M62.00 13.8H71.96M74.16 13.8H84.12M86.32 13.8H96.28M98.48 13.8H108.44M122.80 13.8H132.76M134.96 13.8H144.92M147.12 13.8H157.08M159.28 13.8H169.24M171.24 13.8H181.40M176.32 7.800000000000001V19.8M183.60 13.8H193.56M195.76 13.8H205.72M207.92 13.8H217.88M220.08 13.8H230.04M244.40 13.8H254.36M256.56 13.8H266.52M268.72 13.8H278.68M280.88 13.8H290.84M292.84 13.8H303.00M297.92 7.800000000000001V19.8M305.20 13.8H315.16M317.36 13.8H327.32M329.52 13.8H339.48M341.68 13.8H351.64M366.00 13.8H375.96M378.16 13.8H388.12M390.32 13.8H400.28M402.48 13.8H412.44M414.44 13.8H424.60M419.52 7.800000000000001V19.8M426.80 13.8H436.76M438.96 13.8H448.92M451.12 13.8H461.08M463.28 13.8H473.24M487.60 13.8H497.56M499.76 13.8H509.72M511.92 13.8H521.88M524.08 13.8H534.04M536.04 13.8H546.20M541.12 7.800000000000001V19.8M548.40 13.8H558.36M560.56 13.8H570.52M572.72 13.8H582.68M584.88 13.8H594.84M609.20 13.8H619.16M621.36 13.8H631.32M633.52 13.8H643.48M645.68 13.8H655.64M657.64 13.8H667.80M662.72 7.800000000000001V19.8M670.00 13.8H679.96M682.16 13.8H692.12M694.32 13.8H704.28M706.48 13.8H716.44M730.80 13.8H740.76M742.96 13.8H752.92M755.12 13.8H765.08M767.28 13.8H777.24M779.24 13.8H789.40M784.32 7.800000000000001V19.8M791.60 13.8H801.56M803.76 13.8H813.72M815.92 13.8H825.88M828.08 13.8H838.04M852.40 13.8H862.36M864.56 13.8H874.52M876.72 13.8H886.68M888.88 13.8H898.84M900.84 13.8H911.00M905.92 7.800000000000001V19.8M913.20 13.8H923.16M925.36 13.8H935.32M937.52 13.8H947.48M949.68 13.8H959.64M974.00 13.8H983.96M986.16 13.8H996.12M998.32 13.8H1008.28M1010.48 13.8H1020.44M1022.44 13.8H1032.60M1027.52 7.800000000000001V19.8M1034.80 13.8H1044.76M1046.96 13.8H1056.92"/></g><text x="115.52" y="20.1" text-anchor="middle" font-family="Liberation Mono" font-size="19" stroke="#000080" stroke-width="0.5" fill="#000080">1</text><text x="237.12" y="20.1" text-anchor="middle" font-family="Liberation Mono" font-size="19" stroke="#000080" stroke-width="0.5" fill="#000080">2</text><text x="358.72" y="20.1" text-anchor="middle" font-family="Liberation Mono" font-size="19" stroke="#000080" stroke-width="0.5" fill="#000080">3</text><text x="480.32" y="20.1" text-anchor="middle" font-family="Liberation Mono" font-size="19" stroke="#000080" stroke-width="0.5" fill="#000080">4</text><text x="601.92" y="20.1" text-anchor="middle" font-family="Liberation Mono" font-size="19" stroke="#000080" stroke-width="0.5" fill="#000080">5</text><text x="723.52" y="20.1" text-anchor="middle" font-family="Liberation Mono" font-size="19" stroke="#000080" stroke-width="0.5" fill="#000080">6</text><text x="845.12" y="20.1" text-anchor="middle" font-family="Liberation Mono" font-size="19" stroke="#000080" stroke-width="0.5" fill="#000080">7</text><text x="966.72" y="20.1" text-anchor="middle" font-family="Liberation Mono" font-size="19" stroke="#000080" stroke-width="0.5" fill="#000080">8</text></svg>
<div class="code ln" style="left:217px;top:473.50px">1</div>
<div class="code" style="left:243.5px;top:473.50px"><span style="color:#800000">&lt;?php</span></div>
<div class="code ln" style="left:217px;top:497.88px">2</div>
<div class="code ln" style="left:217px;top:522.26px">3</div>
<div class="code" style="left:243.5px;top:522.26px"><span style="color:#4a1f1f">    </span><span style="color:#0a7d23">//</span><span class="cj" style="color:#0a7d23">包含文件</span><span class="cj" style="color:#0a7d23;position:relative;left:-9px">：</span><span class="cj" style="color:#0a7d23">使用数据</span></div>
<div class="code ln" style="left:217px;top:546.64px">4</div>
<div class="code ln" style="left:217px;top:571.02px">5</div>
<div class="code ln" style="left:217px;top:595.40px">6</div>
<div class="code" style="left:243.5px;top:595.40px"><span style="color:#4a1f1f">    </span><span style="color:#0a7d23">//</span><span class="cj" style="color:#0a7d23">包含文件</span></div>
<div class="code ln" style="left:217px;top:619.78px">7</div>
<div class="code" style="left:243.5px;top:619.78px"><span style="color:#4a1f1f">    </span><span style="color:#1515d5">include</span><span style="color:#4a1f1f"> </span><span style="color:#e516e5">'include1.php'</span><span style="color:#4a1f1f">; </span><span style="color:#0a7d23">//</span><span class="cj" style="color:#0a7d23">包含当前文件</span><span style="color:#0a7d23">include1.php</span></div>
<div class="code ln" style="left:217px;top:644.16px">8</div>
<div class="code ln" style="left:217px;top:668.54px">9</div>
<div class="code" style="left:243.5px;top:668.54px"><span style="color:#4a1f1f">    </span><span style="color:#1515d5">echo</span><span style="color:#4a1f1f"> </span><span style="color:#1515d5">$</span><span style="color:#1f7f86">a</span><span style="color:#4a1f1f">,</span><span style="color:#e51f1f">PI</span><span style="color:#4a1f1f">;</span></div>
<!-- LEFT PANEL -->
<div class="a" style="left:0;top:96px;width:146px;height:597px;background:#f0f0f0"></div>
<div class="a" style="left:146px;top:96px;width:1px;height:597px;background:#707272"></div>
<div class="a" style="left:0;top:95px;width:146px;height:1px;background:#6f7274"></div>
<!-- tabs -->
<div class="a" style="left:68px;top:122px;width:72px;height:3px;border:1px solid #a8a8a8;background:#f4f4f4"></div>
<div class="a" style="left:-1px;top:98px;width:70px;height:27px;background:#fdfdfd;border:1px solid #a0a0a0;border-bottom:none;border-radius:2px 2px 0 0"></div>
<div class="t" style="left:7px;top:103px;font-size:13.8px;color:#111">Directory</div>
<div class="a" style="left:68px;top:99px;width:32px;height:23px;background:linear-gradient(#efefef,#e2e2e2 60%,#dadada);border-top:2px solid #a9a9a9;border-right:1px solid #c8c8c8"></div>
<div class="t" style="left:73px;top:105px;font-size:13px;color:#111;width:26px;overflow:hidden">Clipt</div>
<div class="a" style="left:101px;top:100px;width:19px;height:19px;background:linear-gradient(#f2f2f2,#dcdcdc);border:1px solid #b4b4b4;border-radius:2px"></div>
<div class="a" style="left:121px;top:100px;width:19px;height:19px;background:linear-gradient(#f2f2f2,#dcdcdc);border:1px solid #b4b4b4;border-radius:2px"></div>
<div class="a" style="left:109px;top:106px;width:0;height:0;border-top:3px solid transparent;border-bottom:3px solid transparent;border-right:4px solid #5b6fa5"></div>
<div class="a" style="left:129px;top:106px;width:0;height:0;border-top:3px solid transparent;border-bottom:3px solid transparent;border-left:4px solid #5b6fa5"></div>
<!-- drive dropdown -->
<div class="a" style="left:0;top:126px;width:142px;height:25px;background:linear-gradient(#f3f3f3,#ececec 45%,#dedede 55%,#d8d8d8);border:1px solid #8e8f8f;border-radius:3px"></div>
<div class="t" style="left:4px;top:132px;font-size:13px;color:#111">[E:] <span style="font-size:12.4px;-webkit-text-stroke:0.35px;letter-spacing:0.2px">新加卷</span></div>
<div class="a" style="left:130px;top:137px;width:0;height:0;border-left:4px solid transparent;border-right:4px solid transparent;border-top:4px solid #000"></div>
<!-- tree -->
<div class="a" style="left:-1px;top:153px;width:143px;height:282px;background:#fcfdfb;border:1px solid #8b8e91;border-radius:2px"></div>
<div class="a" style="left:2px;top:216px;width:137px;height:21px;background:linear-gradient(#f8f8f8,#e6e6e6);border:1px solid #d9d9d9;border-radius:2px"></div>
<div id="tree" style="font-size:13.6px;color:#111;-webkit-text-stroke:0.2px">
<div class="a" style="left:15px;top:157px;width:15px;height:16px"><svg width="15" height="16" viewBox="0 0 15 16"><defs><linearGradient id="fg" x1="0" y1="0" x2="1" y2="0"><stop offset="0" stop-color="#e8c65a"/><stop offset="0.35" stop-color="#fbe7a0"/><stop offset="1" stop-color="#eccd6a"/></linearGradient></defs><path d="M0.5 1.5Q0.5 0.5 1.5 0.5H10.5Q11.5 0.5 11.5 1.5V15.5H1.5Q0.5 15.5 0.5 14.5Z" fill="url(#fg)" stroke="#d7b04e" stroke-width="1"/><path d="M11.5 7.5H13Q14.5 7.5 14.5 9V14Q14.5 15.5 13 15.5H11.5Z" fill="#e9cf78" stroke="#c9a848" stroke-width="0.8"/><path d="M12.2 9V14.5" stroke="#f8f8f8" stroke-width="1.2"/></svg></div><div class="t" style="left:37px;top:160px">E:\</div>
<div class="a" style="left:20px;top:177px;width:15px;height:16px"><svg width="15" height="16" viewBox="0 0 15 16"><defs><linearGradient id="fg" x1="0" y1="0" x2="1" y2="0"><stop offset="0" stop-color="#e8c65a"/><stop offset="0.35" stop-color="#fbe7a0"/><stop offset="1" stop-color="#eccd6a"/></linearGradient></defs><path d="M0.5 1.5Q0.5 0.5 1.5 0.5H10.5Q11.5 0.5 11.5 1.5V15.5H1.5Q0.5 15.5 0.5 14.5Z" fill="url(#fg)" stroke="#d7b04e" stroke-width="1"/><path d="M11.5 7.5H13Q14.5 7.5 14.5 9V14Q14.5 15.5 13 15.5H11.5Z" fill="#e9cf78" stroke="#c9a848" stroke-width="0.8"/><path d="M12.2 9V14.5" stroke="#f8f8f8" stroke-width="1.2"/></svg></div><div class="t" style="left:42px;top:180px">server</div>
<div class="a" style="left:25px;top:197px;width:15px;height:16px"><svg width="15" height="16" viewBox="0 0 15 16"><defs><linearGradient id="fg" x1="0" y1="0" x2="1" y2="0"><stop offset="0" stop-color="#e8c65a"/><stop offset="0.35" stop-color="#fbe7a0"/><stop offset="1" stop-color="#eccd6a"/></linearGradient></defs><path d="M0.5 1.5Q0.5 0.5 1.5 0.5H10.5Q11.5 0.5 11.5 1.5V15.5H1.5Q0.5 15.5 0.5 14.5Z" fill="url(#fg)" stroke="#d7b04e" stroke-width="1"/><path d="M11.5 7.5H13Q14.5 7.5 14.5 9V14Q14.5 15.5 13 15.5H11.5Z" fill="#e9cf78" stroke="#c9a848" stroke-width="0.8"/><path d="M12.2 9V14.5" stroke="#f8f8f8" stroke-width="1.2"/></svg></div><div class="t" style="left:47px;top:200px">apache</div>
<div class="a" style="left:31px;top:217px;width:15px;height:16px"><svg width="15" height="16" viewBox="0 0 15 16"><defs><linearGradient id="fg" x1="0" y1="0" x2="1" y2="0"><stop offset="0" stop-color="#e8c65a"/><stop offset="0.35" stop-color="#fbe7a0"/><stop offset="1" stop-color="#eccd6a"/></linearGradient></defs><path d="M0.5 1.5Q0.5 0.5 1.5 0.5H10.5Q11.5 0.5 11.5 1.5V15.5H1.5Q0.5 15.5 0.5 14.5Z" fill="url(#fg)" stroke="#d7b04e" stroke-width="1"/><path d="M11.5 7.5H13Q14.5 7.5 14.5 9V14Q14.5 15.5 13 15.5H11.5Z" fill="#e9cf78" stroke="#c9a848" stroke-width="0.8"/><path d="M12.2 9V14.5" stroke="#f8f8f8" stroke-width="1.2"/></svg></div><div class="t" style="left:52px;top:220px">htdocs</div>
</div>
<!-- file list -->
<div class="a" style="left:-1px;top:438px;width:143px;height:228px;background:#fcfdfb;border:1px solid #8b8e91;border-radius:2px"></div>
<div class="a" style="left:1px;top:543px;width:122px;height:17px;background:#3399ff"></div>
<div class="a" style="left:124px;top:440px;width:17px;height:225px;background:#ececec"></div>
<div class="a" style="left:125px;top:500px;width:15px;height:104px;background:linear-gradient(90deg,#e6e6e6,#f4f4f4 40%,#dcdcdc);border:1px solid #a9a9a9;border-radius:2px"></div>
<div class="a" style="left:129px;top:545px;width:7px;height:1px;background:#444;box-shadow:0 3px 0 #444,0 6px 0 #444"></div>
<div class="a" style="left:129px;top:446px;width:0;height:0;border-left:4px solid transparent;border-right:4px solid transparent;border-bottom:4px solid #333"></div>
<div class="a" style="left:129px;top:654px;width:0;height:0;border-left:4px solid transparent;border-right:4px solid transparent;border-top:4px solid #333"></div>
<div id="files" style="font-size:13.6px;color:#111;-webkit-text-stroke:0.2px">
<div class="t" style="left:3px;top:442px">do-while.php</div>
<div class="t" style="left:3px;top:459px">end.php</div>
<div class="t" style="left:3px;top:477px;letter-spacing:-0.33px">esay_data_type.php</div>
<div class="t" style="left:3px;top:494px">for.php</div>
<div class="t" style="left:3px;top:511px">if.php</div>
<div class="t" style="left:3px;top:529px">include1.php</div>
<div class="t" style="left:3px;top:546px;color:#fff">include2.php</div>
<div class="t" style="left:3px;top:563px">index.html</div>
<div class="t" style="left:3px;top:581px">index.php</div>
<div class="t" style="left:3px;top:598px">iterate_controll.php</div>
<div class="t" style="left:3px;top:615px">operator_bit.php</div>
<div class="t" style="left:3px;top:633px;width:120px;overflow:hidden;height:17px">operator_simple.php</div>
<div class="t" style="left:3px;top:650px">passvalue.php</div>
</div>
<!-- filter dropdown -->
<div class="a" style="left:0;top:668px;width:142px;height:24px;background:linear-gradient(#f3f3f3,#ececec 45%,#dedede 55%,#d8d8d8);border:1px solid #8e8f8f;border-radius:3px"></div>
<div class="t" style="left:3px;top:673px;font-size:13.4px;color:#111">All Files (*.*)</div>
<div class="a" style="left:129px;top:678px;width:0;height:0;border-left:4px solid transparent;border-right:4px solid transparent;border-top:4px solid #000"></div>

<!-- STATUS / TAB BAR -->
<div class="a" style="left:0;top:692px;width:1234px;height:25px;background:linear-gradient(#fbfcfd,#f6f8fb 50%,#eef2f7)"></div>
<div class="a" style="left:0;top:716px;width:1234px;height:1px;background:#c4c6c8"></div>
<div class="a" style="left:0;top:717px;width:1234px;height:2px;background:#f4f4f4"></div>
<div class="a" style="left:0;top:719px;width:1234px;height:1px;background:#9a9c9e"></div>
<div class="a" style="left:0;top:720px;width:1234px;height:15px;background:#f0f0f0"></div>
<div class="t" style="left:2px;top:723px;font-size:13px;color:#111">For Help, press F1</div>
<div class="a" style="left:3px;top:696px;width:15px;height:16px"><svg width="15" height="16" viewBox="0 0 15 16"><defs><linearGradient id="fg" x1="0" y1="0" x2="1" y2="0"><stop offset="0" stop-color="#e8c65a"/><stop offset="0.35" stop-color="#fbe7a0"/><stop offset="1" stop-color="#eccd6a"/></linearGradient></defs><path d="M0.5 1.5Q0.5 0.5 1.5 0.5H10.5Q11.5 0.5 11.5 1.5V15.5H1.5Q0.5 15.5 0.5 14.5Z" fill="url(#fg)" stroke="#d7b04e" stroke-width="1"/><path d="M11.5 7.5H13Q14.5 7.5 14.5 9V14Q14.5 15.5 13 15.5H11.5Z" fill="#e9cf78" stroke="#c9a848" stroke-width="0.8"/><path d="M12.2 9V14.5" stroke="#f8f8f8" stroke-width="1.2"/></svg></div>
<div class="a" style="left:22px;top:695px;width:1px;height:20px;background:#dfe3e8"></div>
<svg class="a" style="left:36px;top:700px" width="10" height="11" viewBox="0 0 10 11"><path d="M4.5 0.5L9.5 5.5L4.5 10.5L0 5.5Z" fill="#2a7ac8" stroke="#1a3a6a" stroke-width="0.8"/><path d="M3 3L5.5 5.5L3 8" fill="none" stroke="#e8f4fc" stroke-width="1.3"/></svg>
<div class="t" style="left:48px;top:699px;font-size:13.4px;color:#111;transform:scaleY(1.1);transform-origin:0 100%">include1.php</div>
<svg class="a" style="left:135px;top:699px" width="11" height="11" viewBox="0 0 11 11"><path d="M1.5 1.5L9.5 9.5M9.5 1.5L1.5 9.5" stroke="#d88a8a" stroke-width="3.2" stroke-linecap="round"/><path d="M1.5 1.5L9.5 9.5M9.5 1.5L1.5 9.5" stroke="#fff" stroke-width="1.3" stroke-linecap="round"/></svg>
<div class="a" style="left:148px;top:693px;width:124px;height:23px;background:linear-gradient(#e6f3fc,#dceffb 45%,#c6e4f7 55%,#c4e3f7);border:1px solid #9fcdee"></div>
<svg class="a" style="left:162px;top:700px" width="10" height="11" viewBox="0 0 10 11"><path d="M4.5 0.5L9.5 5.5L4.5 10.5L0 5.5Z" fill="#2a7ac8" stroke="#1a3a6a" stroke-width="0.8"/><path d="M3 3L5.5 5.5L3 8" fill="none" stroke="#e8f4fc" stroke-width="1.3"/></svg>
<div class="t" style="left:174px;top:699px;font-size:13.4px;color:#111;transform:scaleY(1.1);transform-origin:0 100%">include2.php</div>
<svg class="a" style="left:260px;top:699px" width="11" height="11" viewBox="0 0 11 11"><path d="M1.5 1.5L9.5 9.5M9.5 1.5L1.5 9.5" stroke="#d88a8a" stroke-width="3.2" stroke-linecap="round"/><path d="M1.5 1.5L9.5 9.5M9.5 1.5L1.5 9.5" stroke="#fff" stroke-width="1.3" stroke-linecap="round"/></svg>

<!-- BROWSER -->
<div class="a" style="left:816px;top:263px;width:420px;height:475px;background:#cdcecc;border-left:2px solid #7c7c7c;border-top:1px solid #5a5a5a;border-radius:3px 0 0 0"></div>
<div class="a" style="left:819px;top:307px;width:415px;height:428px;background:#f1f2f0;border-left:1px solid #b4b4b4"></div>
<svg class="a" style="left:816px;top:263px" width="418" height="50" viewBox="0 0 418 50">
<path d="M2 49V44H10L24.5 15.5Q25.5 14.5 27 14.5H205Q207 14.5 208 16.5L220 44H418V49Z" fill="#f1f2f0" stroke="none"/>
<path d="M3 44.5H10.5L24.5 15.5Q25.5 14.5 27 14.5H205Q207 14.5 208 16.5L220.5 44.5H418" fill="none" stroke="#a8a9a7" stroke-width="1"/>
<path d="M218 22.5H246Q247.5 22.5 248 24L252 38.5Q252.5 39.5 251 39.5H225Q224 39.5 223.5 38.5Z" fill="#d6d7d5" stroke="#a3a4a2" stroke-width="1"/>
</svg>
<div class="t" style="left:866px;top:287px;font-size:13.6px;color:#3a4452">localhost/include2.php</div>
<svg class="a" style="left:845px;top:285px" width="14" height="17" viewBox="0 0 14 17"><path d="M2 1.5H8.5L12.5 5.5V15.5H2Z M8.5 1.5V5.5H12.5" fill="none" stroke="#4d4d4d" stroke-width="1.6" stroke-linejoin="round"/></svg>
<svg class="a" style="left:1007px;top:288px" width="12" height="12" viewBox="0 0 12 12"><path d="M2.5 2.5L9.5 9.5M9.5 2.5L2.5 9.5" stroke="#4a4a4a" stroke-width="1.6"/></svg>
<!-- nav -->
<svg class="a" style="left:830px;top:317px" width="80" height="20" viewBox="0 0 80 20">
<path d="M3 9.5H17M9.5 2.5L2.5 9.5L9.5 16.5" fill="none" stroke="#555" stroke-width="2"/>
<path d="M31 9.5H45M38.5 2.5L45.5 9.5L38.5 16.5" fill="none" stroke="#c3c3c3" stroke-width="2"/>
<path d="M71.5 4.5A6 6 0 1 0 73 11" fill="none" stroke="#555" stroke-width="2.2"/>
<path d="M67.5 2.5H74.5V9.5Z" fill="#555"/>
</svg>
<div class="a" style="left:915px;top:312px;width:330px;height:28px;background:#fff;border:1px solid #bfc0be;border-radius:2px"></div>
<svg class="a" style="left:922px;top:318px" width="16" height="16" viewBox="0 0 16 16"><circle cx="8" cy="8" r="6.6" fill="none" stroke="#555" stroke-width="1.5"/><path d="M8 7V12.2" stroke="#555" stroke-width="1.8"/><circle cx="8" cy="4.6" r="1.1" fill="#555"/></svg>
<div class="t" style="left:944px;top:318px;font-size:15.8px;color:#222">localhost<span style="color:#888">/include2.php</span></div>
<div class="a" style="left:819px;top:344px;width:415px;height:1px;background:#c6c7c5"></div>
<div class="a" style="left:820px;top:345px;width:414px;height:390px;background:#fdfefc"></div>
<div class="t" style="left:829px;top:355px;font-family:'Liberation Serif',serif;font-size:17.3px;color:#111">13.</div><div class="t" style="left:853px;top:355px;font-family:'Liberation Serif',serif;font-size:17.3px;color:#111">14</div>
</body></html>
